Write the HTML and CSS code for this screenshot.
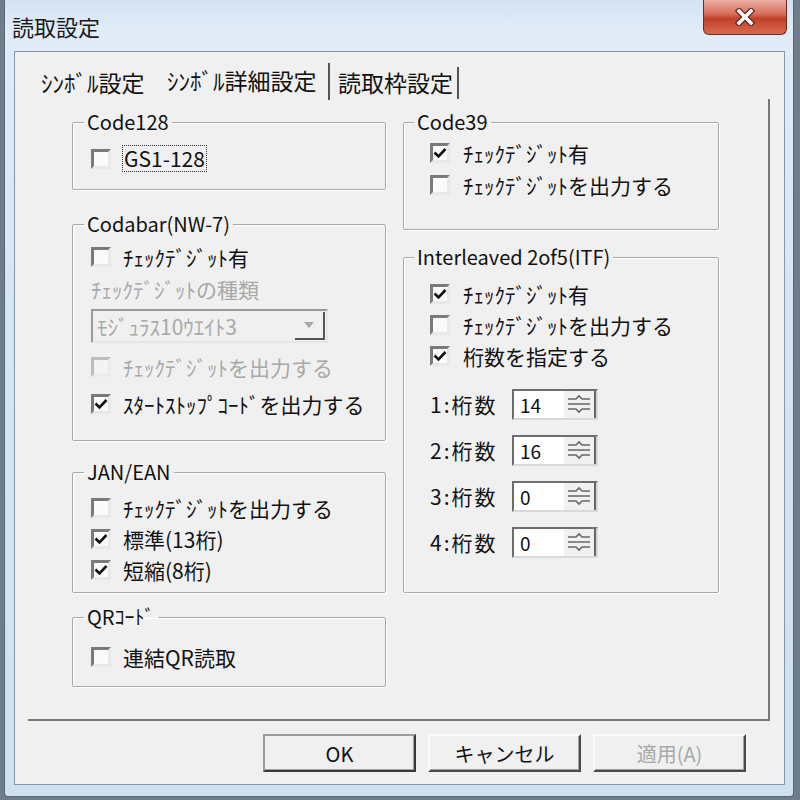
FILE: index.html
```html
<!DOCTYPE html>
<html>

<head>
    <title>読取設定</title>
    <link rel="stylesheet" href="styles.css">
</head>

<body>

    <div class="window">
        <div class="titlebar">
            <span class="title">読取設定</span>
            <div class="close">
                <svg width="22" height="18" viewBox="0 0 22 18">
                    <path d="M5 3 L17 15 M17 3 L5 15" stroke="#5a2620" stroke-width="6" stroke-linecap="square"/>
                    <path d="M5 3 L17 15 M17 3 L5 15" stroke="#ffffff" stroke-width="3.5" stroke-linecap="square"/>
                </svg>
            </div>
        </div>

        <div class="client">
            <div class="tabs">
                <div class="tab">ｼﾝﾎﾞﾙ設定</div>
                <div class="tab active">ｼﾝﾎﾞﾙ詳細設定</div>
                <div class="tab">読取枠設定</div>
            </div>

            <div class="panel">
                <div class="col col-left">
                    <fieldset class="group g-code128">
                        <legend>Code128</legend>
                        <div class="row">
                            <span class="box"></span>
                            <span class="focus">GS1-128</span>
                        </div>
                    </fieldset>

                    <fieldset class="group g-codabar">
                        <legend>Codabar(NW-7)</legend>
                        <div class="row">
                            <span class="box"></span>
                            <span>ﾁｪｯｸﾃﾞｼﾞｯﾄ有</span>
                        </div>
                        <div class="caption">ﾁｪｯｸﾃﾞｼﾞｯﾄの種類</div>
                        <div class="select">
                            <span class="select-text">ﾓｼﾞｭﾗｽ10ｳｴｲﾄ3</span>
                            <span class="select-btn">
                                <svg width="10" height="6" viewBox="0 0 10 6"><path d="M0 0 H10 L5 6 Z" fill="#a8a8a8"/></svg>
                            </span>
                        </div>
                        <div class="row disabled r-gap1">
                            <span class="box"></span>
                            <span>ﾁｪｯｸﾃﾞｼﾞｯﾄを出力する</span>
                        </div>
                        <div class="row r-gap2">
                            <span class="box checked">
                                <svg width="14" height="14" viewBox="0 0 14 14"><path d="M1.5 6.5 L5.5 10.5 L12.5 3" fill="none" stroke="#111" stroke-width="2.6"/></svg>
                            </span>
                            <span>ｽﾀｰﾄｽﾄｯﾌﾟｺｰﾄﾞを出力する</span>
                        </div>
                    </fieldset>

                    <fieldset class="group g-jan">
                        <legend>JAN/EAN</legend>
                        <div class="row">
                            <span class="box"></span>
                            <span>ﾁｪｯｸﾃﾞｼﾞｯﾄを出力する</span>
                        </div>
                        <div class="row">
                            <span class="box checked">
                                <svg width="14" height="14" viewBox="0 0 14 14"><path d="M1.5 6.5 L5.5 10.5 L12.5 3" fill="none" stroke="#111" stroke-width="2.6"/></svg>
                            </span>
                            <span>標準(13桁)</span>
                        </div>
                        <div class="row">
                            <span class="box checked">
                                <svg width="14" height="14" viewBox="0 0 14 14"><path d="M1.5 6.5 L5.5 10.5 L12.5 3" fill="none" stroke="#111" stroke-width="2.6"/></svg>
                            </span>
                            <span>短縮(8桁)</span>
                        </div>
                    </fieldset>

                    <fieldset class="group g-qr">
                        <legend>QRｺｰﾄﾞ</legend>
                        <div class="row">
                            <span class="box"></span>
                            <span>連結QR読取</span>
                        </div>
                    </fieldset>
                </div>

                <div class="col col-right">
                    <fieldset class="group g-code39">
                        <legend>Code39</legend>
                        <div class="row">
                            <span class="box checked">
                                <svg width="14" height="14" viewBox="0 0 14 14"><path d="M1.5 6.5 L5.5 10.5 L12.5 3" fill="none" stroke="#111" stroke-width="2.6"/></svg>
                            </span>
                            <span>ﾁｪｯｸﾃﾞｼﾞｯﾄ有</span>
                        </div>
                        <div class="row">
                            <span class="box"></span>
                            <span>ﾁｪｯｸﾃﾞｼﾞｯﾄを出力する</span>
                        </div>
                    </fieldset>

                    <fieldset class="group g-itf">
                        <legend>Interleaved 2of5(ITF)</legend>
                        <div class="row">
                            <span class="box checked">
                                <svg width="14" height="14" viewBox="0 0 14 14"><path d="M1.5 6.5 L5.5 10.5 L12.5 3" fill="none" stroke="#111" stroke-width="2.6"/></svg>
                            </span>
                            <span>ﾁｪｯｸﾃﾞｼﾞｯﾄ有</span>
                        </div>
                        <div class="row">
                            <span class="box"></span>
                            <span>ﾁｪｯｸﾃﾞｼﾞｯﾄを出力する</span>
                        </div>
                        <div class="row">
                            <span class="box checked">
                                <svg width="14" height="14" viewBox="0 0 14 14"><path d="M1.5 6.5 L5.5 10.5 L12.5 3" fill="none" stroke="#111" stroke-width="2.6"/></svg>
                            </span>
                            <span>桁数を指定する</span>
                        </div>

                        <div class="digits">
                            <div class="digit-row">
                                <span class="digit-label">1:桁数</span>
                                <div class="spin">
                                    <span class="spin-value">14</span>
                                    <span class="spin-btn"><svg width="30" height="26" viewBox="0 0 30 26"><path d="M4 8 H12 L15 5 L18 8 H26 M4 13 H26 M4 18 H12 L15 21 L18 18 H26" fill="none" stroke="#666" stroke-width="1.6"/></svg></span>
                                </div>
                            </div>
                            <div class="digit-row">
                                <span class="digit-label">2:桁数</span>
                                <div class="spin">
                                    <span class="spin-value">16</span>
                                    <span class="spin-btn"><svg width="30" height="26" viewBox="0 0 30 26"><path d="M4 8 H12 L15 5 L18 8 H26 M4 13 H26 M4 18 H12 L15 21 L18 18 H26" fill="none" stroke="#666" stroke-width="1.6"/></svg></span>
                                </div>
                            </div>
                            <div class="digit-row">
                                <span class="digit-label">3:桁数</span>
                                <div class="spin">
                                    <span class="spin-value">0</span>
                                    <span class="spin-btn"><svg width="30" height="26" viewBox="0 0 30 26"><path d="M4 8 H12 L15 5 L18 8 H26 M4 13 H26 M4 18 H12 L15 21 L18 18 H26" fill="none" stroke="#666" stroke-width="1.6"/></svg></span>
                                </div>
                            </div>
                            <div class="digit-row">
                                <span class="digit-label">4:桁数</span>
                                <div class="spin">
                                    <span class="spin-value">0</span>
                                    <span class="spin-btn"><svg width="30" height="26" viewBox="0 0 30 26"><path d="M4 8 H12 L15 5 L18 8 H26 M4 13 H26 M4 18 H12 L15 21 L18 18 H26" fill="none" stroke="#666" stroke-width="1.6"/></svg></span>
                                </div>
                            </div>
                        </div>
                    </fieldset>
                </div>
            </div>

            <div class="buttons">
                <button class="btn default">OK</button>
                <button class="btn">キャンセル</button>
                <button class="btn" disabled>適用(A)</button>
            </div>
        </div>
    </div>

</body>
</html>
```

FILE: styles.css
```css
body {
    margin: 0;
    width: 800px;
    height: 800px;
    overflow: hidden;
    background: #6f7d8a;
    font-family: "Noto Sans CJK JP", "Noto Sans", sans-serif;
    font-size: 21px;
    color: #111;
}
.window {
    box-sizing: border-box;
    width: 790px;
    height: 797px;
    margin-left: 4px;
    padding: 0 8px 11px 9px;
    border: 1px solid #56677a;
    border-top: none;
    border-radius: 0 0 4px 4px;
    background: linear-gradient(#d3e3f4, #e1ecf8 30px, #d6e5f4 300px, #cfe0f1);
    display: flex;
    flex-direction: column;
}
.titlebar {
    height: 52px;
    display: flex;
    justify-content: space-between;
    align-items: flex-start;
}
.title {
    margin-top: 13px;
    margin-left: -2px;
    font-size: 22px;
    line-height: 26px;
    color: #1a1a1a;
}
.close {
    width: 84px;
    height: 35px;
    margin-right: -2px;
    box-sizing: border-box;
    border: 1px solid #6d2a22;
    border-top: none;
    border-radius: 0 0 6px 6px;
    background: linear-gradient(#eab0a4, #d9705c 40%, #c2402b 55%, #d86a50);
    display: flex;
    align-items: center;
    justify-content: center;
}
.client {
    flex: 1;
    box-sizing: border-box;
    background: #f0f0f0;
    border: 1px solid #8596a8;
    padding: 11px 14px 12px 13px;
    display: flex;
    flex-direction: column;
}
.tabs {
    display: flex;
    height: 36px;
    align-items: flex-end;
    font-size: 23px;
}
.tab {
    box-sizing: border-box;
    height: 32px;
    width: 129px;
    padding-left: 13px;
    line-height: 30px;
    white-space: nowrap;
}
.tab.active {
    width: 173px;
    height: 37px;
    padding-left: 10px;
    line-height: 34px;
    border-right: 2px solid #555;
    margin-bottom: -1px;
    background: #f0f0f0;
}
.tab:last-child {
    border-right: 2px solid #555;
    padding-left: 8px;
}
.panel {
    box-sizing: border-box;
    height: 622px;
    border-right: 2px solid #777;
    border-bottom: 2px solid #777;
    padding: 11px 0 0 44px;
    display: flex;
    gap: 17px;
}
.col {
    display: flex;
    flex-direction: column;
}
.col-left {
    width: 314px;
}
.col-right {
    width: 316px;
}
.group {
    box-sizing: border-box;
    margin: 0;
    min-width: 0;
    padding: 0 0 0 18px;
    border: 1px solid #a8a8a8;
    border-radius: 2px;
    box-shadow: inset 1px 1px 0 #fff, 1px 1px 0 #fff;
}
.group legend {
    padding: 0 3px;
    margin-left: -7px;
    line-height: 24px;
    font-size: 20px;
}
.row {
    display: flex;
    align-items: center;
    gap: 12px;
    height: 31px;
    white-space: nowrap;
}
.box {
    box-sizing: border-box;
    width: 20px;
    height: 20px;
    border: 3px solid;
    border-color: #7a7a7a #e8e8e8 #e8e8e8 #7a7a7a;
    background: #fafafa;
    display: flex;
    align-items: center;
    justify-content: center;
}
.disabled {
    color: #a8a8a8;
}
.disabled .box {
    border-color: #bdbdbd #ececec #ececec #bdbdbd;
    background: #f3f3f3;
}
.focus {
    outline: 1px dotted #333;
    padding: 0 1px;
    line-height: 25px;
}

/* group heights */
.g-code128 {
    height: 80px;
    padding-top: 9px;
}
.g-codabar {
    height: 229px;
    margin-top: 22px;
    padding-top: 5px;
}
.g-codabar .row {
    height: 32px;
}
.caption {
    color: #a8a8a8;
    height: 32px;
    line-height: 32px;
    white-space: nowrap;
}
.select {
    box-sizing: border-box;
    width: 237px;
    height: 34px;
    margin-top: 4px;
    border: 2px solid;
    border-color: #9a9a9a #e6e6e6 #e6e6e6 #9a9a9a;
    background: #f0f0f0;
    display: flex;
    align-items: center;
    justify-content: space-between;
    color: #a8a8a8;
}
.select-text {
    padding-left: 4px;
    white-space: nowrap;
}
.select-btn {
    box-sizing: border-box;
    width: 30px;
    height: 28px;
    margin-right: 1px;
    border-right: 2px solid #555;
    border-bottom: 2px solid #555;
    display: flex;
    align-items: center;
    justify-content: center;
}
.r-gap1 {
    margin-top: 8px;
}
.r-gap2 {
    margin-top: 5px;
}
.g-jan {
    height: 133px;
    margin-top: 19px;
    padding-top: 8px;
}
.g-qr {
    height: 82px;
    margin-top: 12px;
    padding-top: 12px;
}
.g-code39 {
    height: 120px;
    padding: 3px 0 0 26px;
}
.g-code39 .row {
    height: 32px;
    gap: 13px;
}
.col-right .group legend {
    margin-left: -16px;
}
.g-itf {
    height: 348px;
    margin-top: 15px;
    padding: 9px 0 0 26px;
}
.g-itf .row {
    gap: 13px;
}
.digits {
    margin-top: 10px;
}
.digit-row {
    height: 46px;
    display: flex;
    align-items: center;
}
.digit-label {
    width: 82px;
    white-space: nowrap;
    letter-spacing: 2px;
}
.spin {
    box-sizing: border-box;
    width: 86px;
    height: 31px;
    border: 2px solid;
    border-color: #6e6e6e #d8d8d8 #d8d8d8 #6e6e6e;
    background: #fff;
    display: flex;
    align-items: center;
    justify-content: space-between;
}
.spin-value {
    padding-left: 6px;
    font-size: 19px;
}
.spin-btn {
    height: 27px;
    border-right: 2px solid #666;
    background: #f0f0f0;
    display: flex;
    align-items: center;
}
.buttons {
    margin-top: 13px;
    display: flex;
    justify-content: flex-end;
    gap: 12px;
    padding-right: 24px;
}
.btn {
    box-sizing: border-box;
    width: 153px;
    height: 38px;
    font-family: "Noto Sans CJK JP", "Noto Sans", sans-serif;
    font-size: 20px;
    color: #111;
    background: #f0f0f0;
    border: 2px solid;
    border-color: #fbfbfb #4a4a4a #4a4a4a #fbfbfb;
    box-shadow: inset -1px -1px 0 #a0a0a0;
    padding: 0;
}
.btn.default {
    border-color: #9a9a9a #3a3a3a #3a3a3a #9a9a9a;
}
.btn:disabled {
    color: #a8a8a8;
}
```
